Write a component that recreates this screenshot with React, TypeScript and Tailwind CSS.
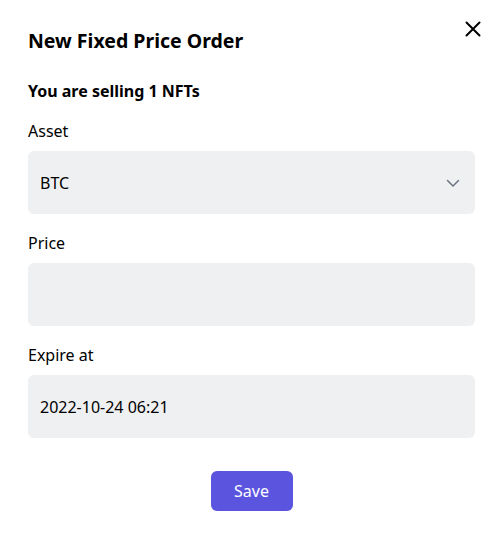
export default function App() {
  return (
    <div className="min-h-[542px] w-[503px] bg-white font-['Noto_Sans',sans-serif] text-black">
      <div className="relative px-[28px] pt-[27px] pb-[31px]">
        <button className="absolute right-[14px] top-[13px] p-1 text-black" aria-label="Close">
          <svg width="24" height="24" viewBox="0 0 24 24" fill="none" stroke="currentColor" strokeWidth="2" strokeLinecap="round">
            <path d="M5.5 5.5l13 13M18.5 5.5l-13 13" />
          </svg>
        </button>
        <h2 className="text-[19.5px] leading-[28px] font-bold">New Fixed Price Order</h2>
        <p className="mt-[24px] text-[16px] leading-[24px] font-bold">You are selling 1 NFTs</p>

        <div className="mt-[16px] flex flex-col gap-[17px]">
          <div className="flex flex-col gap-[8px]">
            <label className="text-[16px] leading-[24px]">Asset</label>
            <div className="flex h-[63px] items-center justify-between rounded-md bg-[#eff0f2] pl-[12px] pr-[12px]">
              <span className="text-[16px]">BTC</span>
              <svg width="20" height="20" viewBox="0 0 20 20" fill="none" stroke="#6b7280" strokeWidth="1.5" strokeLinecap="round" strokeLinejoin="round">
                <path d="M4.5 7.5l5.5 5.5 5.5-5.5" />
              </svg>
            </div>
          </div>
          <div className="flex flex-col gap-[8px]">
            <label className="text-[16px] leading-[24px]">Price</label>
            <div className="h-[63px] rounded-md bg-[#eff0f2]" />
          </div>
          <div className="flex flex-col gap-[8px]">
            <label className="text-[16px] leading-[24px]">Expire at</label>
            <div className="flex h-[63px] items-center rounded-md bg-[#eff0f2] px-[12px]">
              <span className="text-[16px]">2022-10-24 06:21</span>
            </div>
          </div>
        </div>

        <div className="mt-[33px] flex justify-center">
          <button className="h-[40px] w-[82px] rounded-md bg-[#5a54df] text-[16px] text-white">Save</button>
        </div>
      </div>
    </div>
  );
}
